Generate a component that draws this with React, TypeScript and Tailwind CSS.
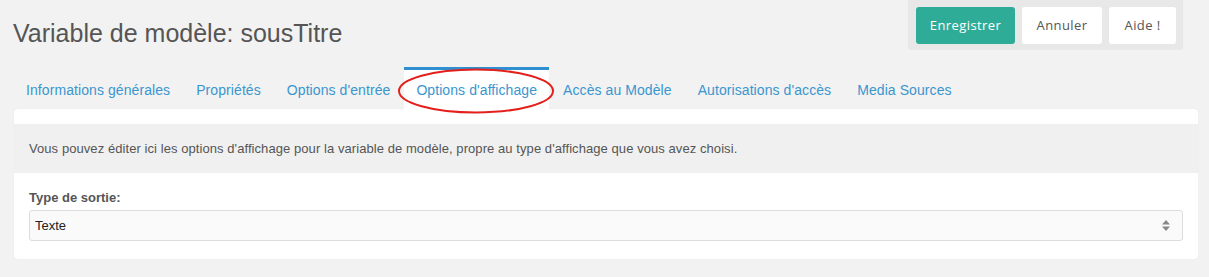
import React from 'react';

const tabs = [
  'Informations générales',
  'Propriétés',
  "Options d'entrée",
  "Options d'affichage",
  'Accès au Modèle',
  "Autorisations d'accès",
  'Media Sources',
];

const ACTIVE = 3;

export default function App() {
  return (
    <div className="w-[1209px] h-[277px] overflow-hidden bg-[#f2f2f2] font-['Liberation_Sans',Arial,sans-serif]">
      {/* header */}
      <div className="flex h-[67px] items-start justify-between pl-[13px] pr-[26px]">
        <h1 className="mt-[19px] text-[25px] leading-[28px] text-[#555]">Variable de modèle: sousTitre</h1>
        <div className="flex gap-[7px] rounded-b-[3px] bg-[#e8e8e8] px-[7px] pt-[7px] pb-[6px] font-['Open_Sans',sans-serif] text-[13px]">
          <button className="ml-[1px] h-[37px] w-[99px] rounded-[3px] bg-[#2fac97] tracking-[0.4px] text-white">Enregistrer</button>
          <button className="h-[37px] w-[80px] rounded-[3px] bg-white tracking-[0.4px] text-[#555]">Annuler</button>
          <button className="h-[37px] w-[67px] rounded-[3px] bg-white tracking-[0.4px] text-[#555]">Aide !</button>
        </div>
      </div>

      {/* tabs */}
      <div className="ml-[14px] flex h-[42px] gap-[2px] text-[14px] tracking-[0.08px] text-[#3a96cf]">
        {tabs.map((t, i) =>
          i === ACTIVE ? (
            <div key={t} className="relative flex items-center border-t-[3px] border-[#2f8fd0] bg-white px-[12px] pt-[2px]">
              {t}
              <svg className="pointer-events-none absolute left-[-7px] top-[-2px]" width="158" height="46" viewBox="0 0 158 46">
                <ellipse cx="79" cy="23" rx="77" ry="21.5" fill="none" stroke="#e3201b" strokeWidth="2" />
              </svg>
            </div>
          ) : (
            <div key={t} className="flex items-center px-[12px] pt-[5px]">
              {t}
            </div>
          )
        )}
      </div>

      {/* panel */}
      <div className="ml-[14px] w-[1184px] rounded-[3px] bg-white pt-[15px] pb-[18px] shadow-[0_0_1px_rgba(0,0,0,0.15)]">
        <div className="flex h-[49px] items-center bg-[#f0f0f0] px-[15px] text-[13px] tracking-[0.07px] text-[#555]">
          Vous pouvez éditer ici les options d'affichage pour la variable de modèle, propre au type d'affichage que vous avez choisi.
        </div>
        <div className="px-[15px] pt-[17px]">
          <div className="text-[13px] font-bold leading-[16px] text-[#555]">Type de sortie:</div>
          <div className="mt-[4px] flex h-[31px] w-[1154px] items-center justify-between rounded-[3px] border border-[#dcdcdc] bg-[#fafafa] pl-[5px] pr-[12px] text-[13px] text-[#222]">
            <span>Texte</span>
            <svg width="8" height="11" viewBox="0 0 8 11">
              <path d="M4 0 L8 4.5 H0 Z" fill="#888" />
              <path d="M4 11 L8 6.5 H0 Z" fill="#888" />
            </svg>
          </div>
        </div>
      </div>
    </div>
  );
}
